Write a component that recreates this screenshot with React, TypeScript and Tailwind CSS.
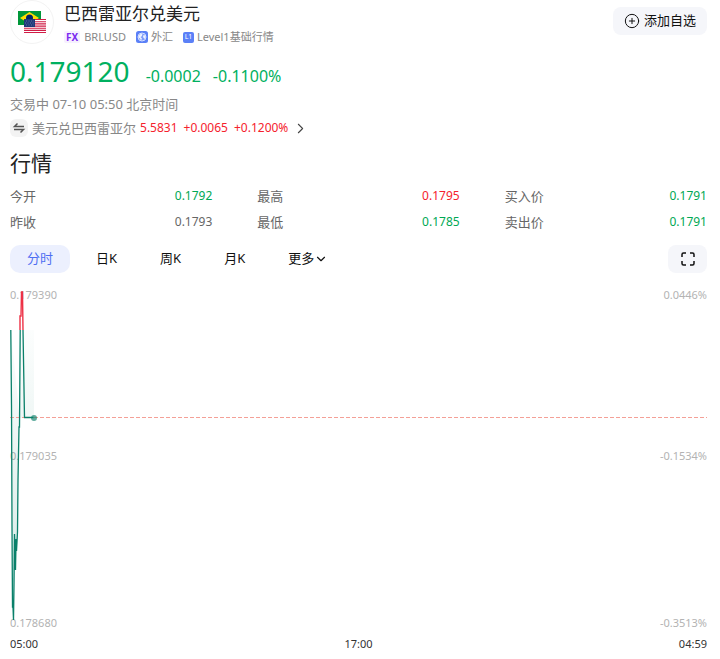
import { useState } from 'react';
import { ChevronDown, ChevronRight, CirclePlus } from 'lucide-react';

const quotes = [
  { label: '今开', value: '0.1792', color: 'text-[#00a854]' },
  { label: '最高', value: '0.1795', color: 'text-[#f5222d]' },
  { label: '买入价', value: '0.1791', color: 'text-[#00a854]' },
  { label: '昨收', value: '0.1793', color: 'text-[#666666]' },
  { label: '最低', value: '0.1785', color: 'text-[#00a854]' },
  { label: '卖出价', value: '0.1791', color: 'text-[#00a854]' },
];

const tabs = ['分时', '日K', '周K', '月K'];

function Flags() {
  return (
    <svg width="28" height="22" viewBox="0 0 28 22" aria-hidden="true">
      <rect width="23" height="14" fill="#009739" />
      <path d="M2 7 11.500 1 21 7l-9.500 6z" fill="#fedd00" />
      <circle cx="11.500" cy="7" r="3.500" fill="#012169" />
      <rect x="6" y="8" width="22" height="14" fill="#fff" />
      <path d="M6 8.500h22M6 10.700h22M6 12.900h22M6 15.100h22M6 17.300h22M6 19.400h22M6 21.500h22" stroke="#d01c46" strokeWidth="1.100" />
      <path d="M6 8h11v8H6z" fill="#1f3a7a" />
      <path d="M8 10h8M7 12h9M8 14h8" stroke="#6d80ab" strokeWidth=".8" strokeDasharray="1 1.500" />
    </svg>
  );
}

function GlobeBadge() {
  return (
    <svg width="12" height="12" viewBox="0 0 12 12" fill="none" aria-hidden="true">
      <rect width="12" height="12" rx="2.500" fill="#5b80f7" />
      <circle cx="6" cy="6" r="4" fill="#7f9cf9" stroke="#d3deff" />
      <path d="M3 4.500 5 2.500 6.500 3.500 5.500 5.500 4.500 6 6 7.500 5 9.500 4 7.500 2.500 6.500zM7.500 4l2 .5v2L8.500 8 7 6z" fill="#eef2ff" />
    </svg>
  );
}

function LevelBadge() {
  return (
    <span className="flex h-[11px] w-[11px] items-center justify-center rounded-xs bg-[#5b80f7] text-[7px] text-white">
      L1
    </span>
  );
}

function SwapIcon() {
  return (
    <svg width="18" height="18" viewBox="0 0 18 18" fill="none" stroke="#555" strokeWidth="1.500" aria-hidden="true">
      <rect width="18" height="18" rx="6" fill="#f3f3f3" stroke="none" />
      <path d="M14 7.500H4.500l3-3M4 10.500h9.500l-3 3" />
    </svg>
  );
}

function ExpandIcon() {
  return (
    <svg width="14" height="14" viewBox="0 0 14 14" fill="none" stroke="#111" strokeWidth="1.500" aria-hidden="true">
      <path d="M1 5V2.500Q1 1 2.500 1H5M9 1h2.500Q13 1 13 2.500V5M13 9v2.500q0 1.500-1.500 1.500H9M5 13H2.500Q1 13 1 11.500V9" />
    </svg>
  );
}

function Chart() {
  return (
    <div className="relative mt-3 h-[351px] text-[11px] leading-4 text-[#b3b3b3]">
      <div className="grid grid-rows-[161px_167px_16px] pt-[2px]">
        <div className="flex justify-between">
          <span>0.179390</span>
          <span>0.0446%</span>
        </div>
        <div className="flex justify-between">
          <span>0.179035</span>
          <span>-0.1534%</span>
        </div>
        <div className="flex justify-between">
          <span>0.178680</span>
          <span>-0.3513%</span>
        </div>
      </div>
      <svg className="absolute inset-0 h-full w-full" fill="none" aria-hidden="true">
        <defs>
          <linearGradient id="area" x1="0" y1="40" x2="0" y2="340" gradientUnits="userSpaceOnUse">
            <stop offset="0" stopColor="#0a806a" stopOpacity=".01" />
            <stop offset="1" stopColor="#0a806a" stopOpacity=".18" />
          </linearGradient>
        </defs>
        <path d="M1 45 2 180 3 323 3.500 335 4.500 248 5.500 285 7 260 8 247 8.500 180 9.500 142 10 45h14v88H9.500z" fill="url(#area)" />
        <line x1="0" y1="132.500" x2="100%" y2="132.500" stroke="#f4a097" strokeDasharray="4 2" />
        <path
          d="M.8 45 1.500 120 2 240 2.500 322H3L3.500 335 4 300 4.500 249 5.500 285 6 254 6.500 266 7.500 247 8 195 9 142H9.500L10.200 45"
          stroke="#0a806a"
          strokeWidth="1.300"
        />
        <path d="M10 45V31h1L11.500 7h1L13 45" stroke="#ed3045" strokeWidth="1.400" />
        <path d="M13 45 14.500 132.500h9" stroke="#0a806a" strokeWidth="1.300" />
        <circle cx="24" cy="133" r="3" fill="#0a806a" fillOpacity=".65" />
      </svg>
    </div>
  );
}

export default function App() {
  const [active, setActive] = useState('分时');

  return (
    <main className="w-full bg-white pr-[13px] pl-[10px] font-['Noto_Sans','Noto_Sans_CJK_SC',sans-serif] text-[#222222]">
      <header className="flex items-start justify-between">
        <div className="flex items-start gap-[10px]">
          <div className="flex h-11 w-11 items-center justify-center rounded-full border border-[#f3f3f3]">
            <Flags />
          </div>
          <div className="pt-[2px]">
            <h1 className="text-[17px] leading-6">巴西雷亚尔兑美元</h1>
            <div className="flex items-center gap-[10px] pt-[3px] text-[11px] leading-4 text-[#888888]">
              <span className="flex items-center gap-1">
                <span className="rounded-xs bg-[#f6f0ff] px-[2px] text-[10px] leading-3 font-bold text-[#7c2bf0]">FX</span>
                BRLUSD
              </span>
              <span className="flex items-center gap-[3px]">
                <GlobeBadge />
                外汇
              </span>
              <span className="flex items-center gap-[3px]">
                <LevelBadge />
                Level1基础行情
              </span>
            </div>
          </div>
        </div>
        <button className="mt-[7px] flex h-7 items-center gap-1 rounded-lg bg-[#f5f6fa] px-[11px] text-[13px] text-[#111111]">
          <CirclePlus size={16} strokeWidth={1.5} />
          添加自选
        </button>
      </header>

      <section className="pt-2">
        <div className="flex items-baseline gap-4 leading-9 text-[#00b060]">
          <span className="text-[28px]">0.179120</span>
          <span className="flex gap-3 text-[16px]">
            <span>-0.0002</span>
            <span>-0.1100%</span>
          </span>
        </div>
        <p className="text-[13px] leading-5 text-[#888888]">交易中 07-10 05:50 北京时间</p>
        <a href="#usdbrl" className="flex items-center gap-1 pt-1 text-[13px] leading-5 text-[#888888]">
          <SwapIcon />
          <span>美元兑巴西雷亚尔</span>
          <span className="flex gap-[6px] text-[12px] text-[#f5222d]">
            <span>5.5831</span>
            <span>+0.0065</span>
            <span>+0.1200%</span>
          </span>
          <ChevronRight size={17} strokeWidth={1.5} className="text-[#444444]" />
        </a>
      </section>

      <section>
        <h2 className="pt-[11px] text-[21px] leading-7">行情</h2>
        <dl className="grid grid-cols-3 gap-x-[45px] gap-y-[6px] pt-[9px] text-[13px] leading-5">
          {quotes.map((q) => (
            <div key={q.label} className="flex justify-between">
              <dt className="text-[#666666]">{q.label}</dt>
              <dd className={`text-[12px] ${q.color}`}>{q.value}</dd>
            </div>
          ))}
        </dl>
      </section>

      <section className="pt-[13px]">
        <div className="flex items-center justify-between">
          <div className="flex gap-[9px] text-[13px]">
            {tabs.map((tab) => (
              <button
                key={tab}
                onClick={() => setActive(tab)}
                className={`h-7 rounded-[10px] px-[17px] ${active === tab ? 'bg-[#ecf0fe] text-[#4e6ef2]' : 'text-[#111111]'}`}
              >
                {tab}
              </button>
            ))}
            <button className="flex h-7 items-center px-[17px] text-[#111111]">
              更多
              <ChevronDown size={14} strokeWidth={2} />
            </button>
          </div>
          <button aria-label="全屏" className="flex h-7 w-[39px] items-center justify-center rounded-lg bg-[#f5f6fa]">
            <ExpandIcon />
          </button>
        </div>
        <Chart />
        <div className="grid grid-cols-3 text-[11px] leading-4 text-[#333333]">
          <span>05:00</span>
          <span className="text-center">17:00</span>
          <span className="text-right">04:59</span>
        </div>
      </section>
    </main>
  );
}
